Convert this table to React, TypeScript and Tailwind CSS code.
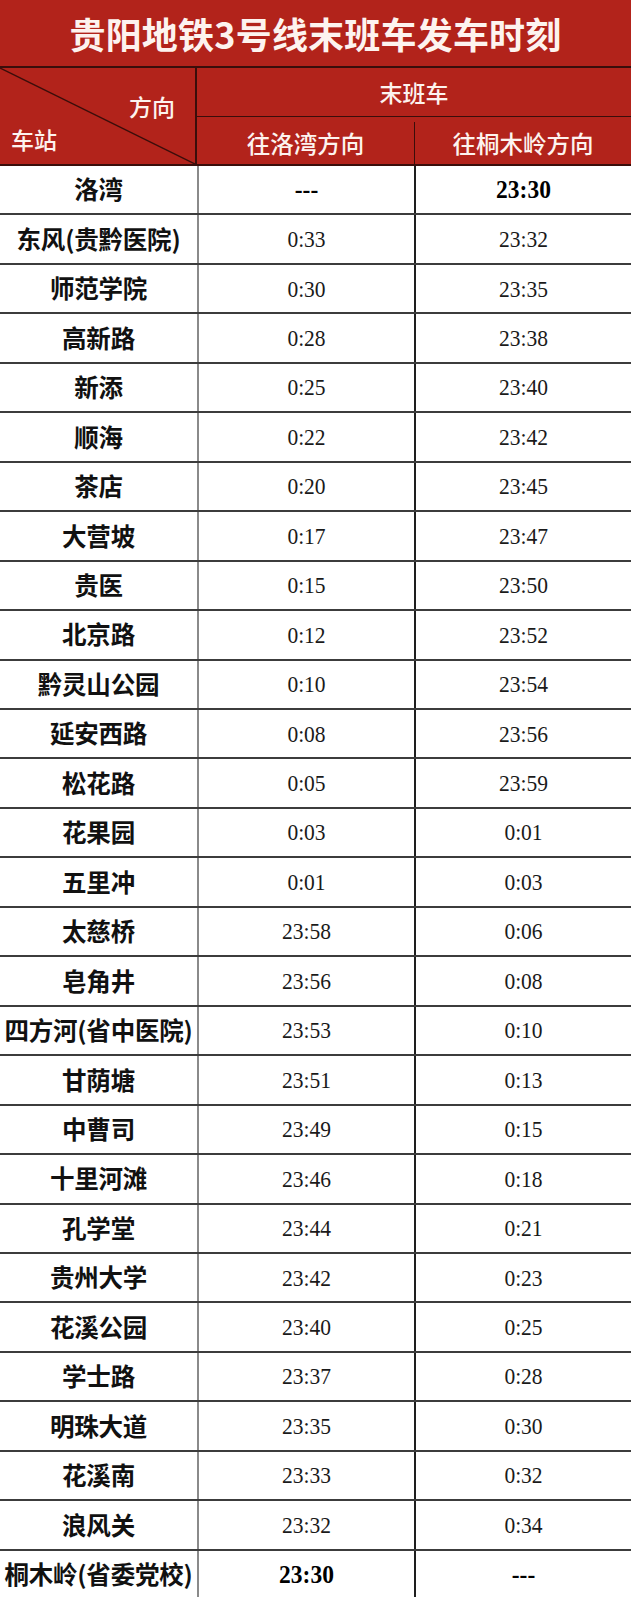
import React from "react";

const RED = "bg-[#b2231b]";

type Row = { name: string; a: string; b: string; boldA?: boolean; boldB?: boolean };

const ROWS: Row[] = [
  { name: "洛湾", a: "---", b: "23:30", boldA: true, boldB: true },
  { name: "东风(贵黔医院)", a: "0:33", b: "23:32" },
  { name: "师范学院", a: "0:30", b: "23:35" },
  { name: "高新路", a: "0:28", b: "23:38" },
  { name: "新添", a: "0:25", b: "23:40" },
  { name: "顺海", a: "0:22", b: "23:42" },
  { name: "茶店", a: "0:20", b: "23:45" },
  { name: "大营坡", a: "0:17", b: "23:47" },
  { name: "贵医", a: "0:15", b: "23:50" },
  { name: "北京路", a: "0:12", b: "23:52" },
  { name: "黔灵山公园", a: "0:10", b: "23:54" },
  { name: "延安西路", a: "0:08", b: "23:56" },
  { name: "松花路", a: "0:05", b: "23:59" },
  { name: "花果园", a: "0:03", b: "0:01" },
  { name: "五里冲", a: "0:01", b: "0:03" },
  { name: "太慈桥", a: "23:58", b: "0:06" },
  { name: "皂角井", a: "23:56", b: "0:08" },
  { name: "四方河(省中医院)", a: "23:53", b: "0:10" },
  { name: "甘荫塘", a: "23:51", b: "0:13" },
  { name: "中曹司", a: "23:49", b: "0:15" },
  { name: "十里河滩", a: "23:46", b: "0:18" },
  { name: "孔学堂", a: "23:44", b: "0:21" },
  { name: "贵州大学", a: "23:42", b: "0:23" },
  { name: "花溪公园", a: "23:40", b: "0:25" },
  { name: "学士路", a: "23:37", b: "0:28" },
  { name: "明珠大道", a: "23:35", b: "0:30" },
  { name: "花溪南", a: "23:33", b: "0:32" },
  { name: "浪风关", a: "23:32", b: "0:34" },
  { name: "桐木岭(省委党校)", a: "23:30", b: "---", boldA: true, boldB: true },
];

const cjk = "font-['Noto_Sans_CJK_SC',sans-serif]";
const serif = "font-['Liberation_Serif','Times_New_Roman',serif]";

function TimeCell({ value, bold, edge }: { value: string; bold?: boolean; edge: string }) {
  return (
    <div className={`flex items-center justify-center border-l-2 ${edge} ${serif} text-black`}>
      <span className={`inline-block scale-y-[1.1] ${bold ? "text-[23.5px] font-bold" : "text-[21.5px] text-[#1a1a1a]"}`}>{value}</span>
    </div>
  );
}

export default function App() {
  return (
    <div className="w-[631px] h-[1597px] overflow-hidden bg-white">
      <div className={`${RED} h-[66px] flex items-center justify-center pb-[1px]`}>
        <h1 className={`${cjk} text-[36px] font-bold text-[#fdf3ef] tracking-[0.2px]`}>贵阳地铁3号线末班车发车时刻</h1>
      </div>

      <div className={`${RED} h-[100px] border-y-2 border-[#3a0e0b] grid grid-cols-[197px_217px_1fr] ${cjk} text-[#fdf3ef] font-medium`}>
        <div className="relative row-span-2 border-r-2 border-[#3a0e0b]">
          <svg className="absolute inset-0 h-full w-full" viewBox="0 0 100 100" preserveAspectRatio="none">
            <line x1="0" y1="0" x2="100" y2="100" stroke="#3a0e0b" strokeWidth="1.4" vectorEffect="non-scaling-stroke" />
          </svg>
          <span className="absolute right-[20px] top-[21px] text-[23px]">方向</span>
          <span className="absolute left-[11px] top-[54px] text-[23px]">车站</span>
        </div>
        <div className="col-span-2 h-[49px] flex items-center justify-center text-[23px] border-b-[1.5px] border-[#3a0e0b]">末班车</div>
        <div className="flex items-center justify-center text-[23.5px] pt-[1px]">往洛湾方向</div>
        <div className="flex items-center justify-center text-[23.5px] pt-[1px] border-l-[1.5px] border-[#3a0e0b]">往桐木岭方向</div>
      </div>

      {ROWS.map((r) => (
        <div key={r.name} className="grid grid-cols-[197px_217px_1fr] h-[49.46px] border-b-2 border-[#3c3c3c]">
          <div className={`flex items-center justify-center ${cjk} text-[24.5px] font-bold text-[#111] whitespace-nowrap tracking-[-0.2px]`}>{r.name}</div>
          <TimeCell value={r.a} bold={r.boldA} edge="border-[#8a8a8a]" />
          <TimeCell value={r.b} bold={r.boldB} edge="border-[#1e1e1e]" />
        </div>
      ))}
    </div>
  );
}
